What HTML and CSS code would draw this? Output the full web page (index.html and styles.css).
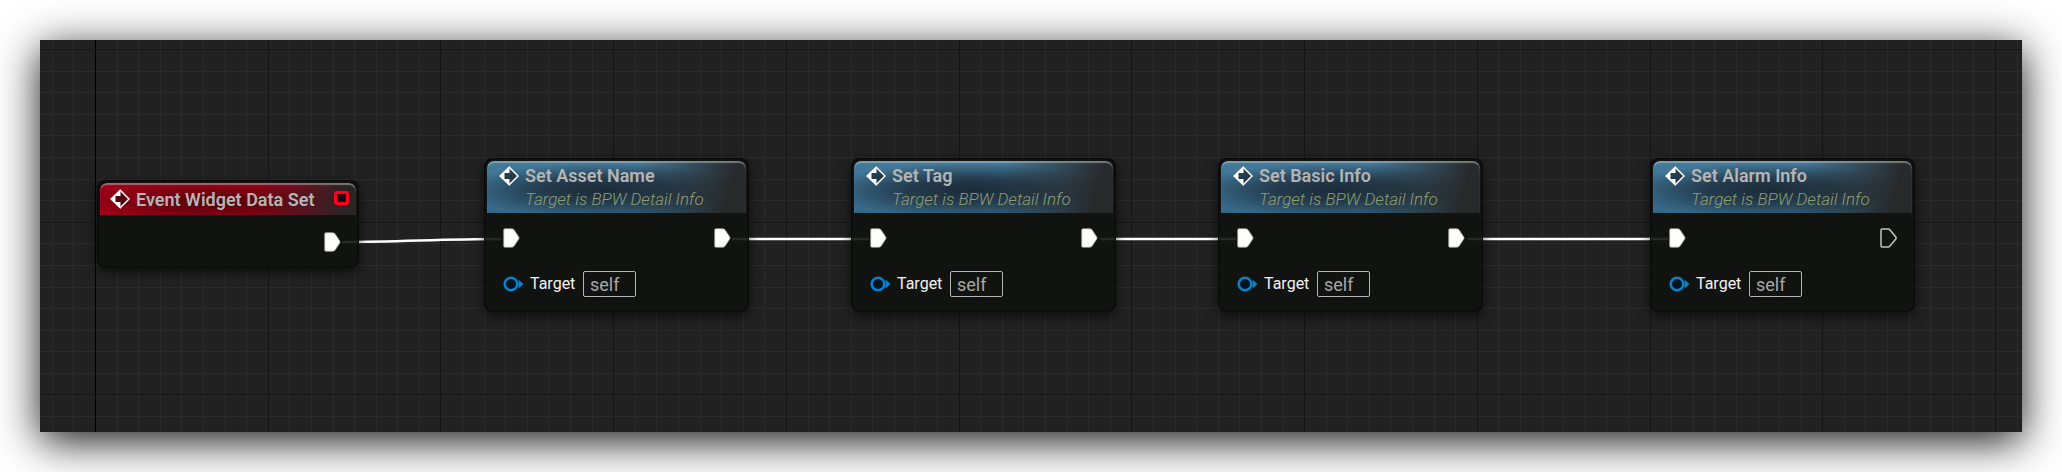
FILE: index.html
```html
<!DOCTYPE html>
<html lang="en">
<head>
<meta charset="utf-8">
<title>Event Graph</title>
<link rel="stylesheet" href="styles.css">
</head>
<body>
<svg class="defs" aria-hidden="true">
  <symbol id="event-icon" viewBox="0 0 20 20">
    <path d="M10 .8 L19.200 10 L10 19.200 L.8 10 Z" fill="#000" fill-opacity=".4"/>
    <path d="M10 1 L19 10 L10 19" fill="none" stroke="#fff" stroke-width="1.500"/>
    <path d="M10.500 0 L0 10 L10.500 20 V13 H5.500 V7 H10.500 Z" fill="#fff"/>
  </symbol>
  <symbol id="exec-on" viewBox="0 0 17 20">
    <path d="M2 .7 H8.500 Q10 .7 11 1.700 L15.800 9 Q16.400 10 15.800 11 L11 18.300 Q10 19.300 8.500 19.300 H2 Q.7 19.300 .7 18 V2 Q.7 .7 2 .7 Z" fill="#fff" stroke="#999" stroke-width=".8"/>
  </symbol>
  <symbol id="exec-off" viewBox="0 0 17 20">
    <path d="M2 1 H8 Q9.200 1 10 2 L15.800 9 Q16.400 10 15.800 11 L10 18 Q9.200 19 8 19 H2 Q1 19 1 18 V2 Q1 1 2 1 Z" fill="none" stroke="#c4c4c4" stroke-width="1.500"/>
  </symbol>
  <symbol id="object-pin" viewBox="0 0 21 16">
    <circle cx="8" cy="8" r="6.300" fill="#03121c" stroke="#0780d0" stroke-width="2.600"/>
    <path d="M15.500 3.500 L20.500 8 L15.500 12.500 Z" fill="#0780d0"/>
  </symbol>
</svg>

<main class="graph">
  <svg class="grid" id="grid" aria-hidden="true"></svg>
  <svg class="wires" aria-hidden="true">
    <path d="M302 202 C360 202 400 199 461 199"/>
    <path d="M692 199 H829"/>
    <path d="M1060 199 H1196"/>
    <path d="M1428 199 H1628"/>
  </svg>

  <article class="node event">
    <header class="head">
      <svg class="icon"><use href="#event-icon"/></svg>
      <h2 class="title">Event Widget Data Set</h2>
      <span class="delegate"></span>
    </header>
    <div class="row exec"><svg class="pin"><use href="#exec-on"/></svg></div>
  </article>

  <article class="node call asset">
    <header class="head">
      <svg class="icon"><use href="#event-icon"/></svg>
      <div><h2 class="title">Set Asset Name</h2><p class="sub">Target is BPW Detail Info</p></div>
    </header>
    <div class="row exec"><svg class="pin"><use href="#exec-on"/></svg><svg class="pin"><use href="#exec-on"/></svg></div>
    <div class="row target"><svg class="object"><use href="#object-pin"/></svg><label class="name" for="t1">Target</label><input class="self" id="t1" value="self"></div>
  </article>

  <article class="node call tag">
    <header class="head">
      <svg class="icon"><use href="#event-icon"/></svg>
      <div><h2 class="title">Set Tag</h2><p class="sub">Target is BPW Detail Info</p></div>
    </header>
    <div class="row exec"><svg class="pin"><use href="#exec-on"/></svg><svg class="pin"><use href="#exec-on"/></svg></div>
    <div class="row target"><svg class="object"><use href="#object-pin"/></svg><label class="name" for="t2">Target</label><input class="self" id="t2" value="self"></div>
  </article>

  <article class="node call basic">
    <header class="head">
      <svg class="icon"><use href="#event-icon"/></svg>
      <div><h2 class="title">Set Basic Info</h2><p class="sub">Target is BPW Detail Info</p></div>
    </header>
    <div class="row exec"><svg class="pin"><use href="#exec-on"/></svg><svg class="pin"><use href="#exec-on"/></svg></div>
    <div class="row target"><svg class="object"><use href="#object-pin"/></svg><label class="name" for="t3">Target</label><input class="self" id="t3" value="self"></div>
  </article>

  <article class="node call alarm">
    <header class="head">
      <svg class="icon"><use href="#event-icon"/></svg>
      <div><h2 class="title">Set Alarm Info</h2><p class="sub">Target is BPW Detail Info</p></div>
    </header>
    <div class="row exec"><svg class="pin"><use href="#exec-on"/></svg><svg class="pin"><use href="#exec-off"/></svg></div>
    <div class="row target"><svg class="object"><use href="#object-pin"/></svg><label class="name" for="t4">Target</label><input class="self" id="t4" value="self"></div>
  </article>
</main>
<script src="grid.js"></script>
</body>
</html>
```

FILE: styles.css
```css
* {
  box-sizing: border-box;
}

body {
  margin: 0;
  padding: 40px;
  min-height: 100vh;
  display: flex;
  background: #fff;
  font-family: Roboto, "Liberation Sans", sans-serif;
}

.defs {
  position: absolute;
  width: 0;
  height: 0;
}

.graph {
  position: relative;
  flex: 1;
  background: #212121;
  box-shadow: 0 9px 40px rgba(0, 0, 0, .92);
}

.grid,
.wires {
  position: absolute;
  inset: 0;
  width: 100%;
  height: 100%;
}

.grid .minor {
  fill: #2b2b2b;
}

.grid .major {
  fill: #151515;
}

.grid .origin {
  fill: #000;
}

.wires path {
  fill: none;
  stroke: #fff;
  stroke-width: 2.5;
}

.node {
  position: absolute;
  width: 265px;
  padding: 3px;
  border-radius: 9px;
  background: rgba(15, 18, 15, .9);
  box-shadow: inset 0 0 0 1px #0b0b0b, inset 0 0 2px 1px rgba(0, 0, 0, .5), 0 4px 12px rgba(0, 0, 0, .6);
}

.event { left: 57px; top: 140px; width: 262px; }
.asset { left: 444px; top: 118px; }
.tag { left: 811px; top: 118px; }
.basic { left: 1178px; top: 118px; }
.alarm { left: 1610px; top: 118px; }

.head {
  display: flex;
  align-items: flex-start;
  border-radius: 7px 7px 0 0;
}

.event .head {
  gap: 6px;
  height: 32px;
  padding: 6px 7px 0 10px;
  background:
    linear-gradient(100deg, rgba(36, 38, 38, 0) 60%, rgba(36, 38, 38, .95) 95%),
    radial-gradient(ellipse 50% 60% at 45% 60%, rgba(50, 0, 6, .75), rgba(50, 0, 6, 0)),
    #9b0016;
  box-shadow: inset 0 2px 1px rgba(170, 170, 170, .6);
}

.call .head {
  gap: 6px;
  height: 52px;
  padding: 5px 12px 0;
  background:
    linear-gradient(105deg, rgba(38, 38, 38, 0) 55%, rgba(38, 38, 38, .95) 92%),
    radial-gradient(ellipse 55% 52% at 45% 56%, rgba(26, 38, 50, .95), rgba(26, 38, 50, .7) 45%, rgba(26, 38, 50, 0)),
    linear-gradient(#447a9b, #356787);
  box-shadow: inset 0 2px 1px rgba(190, 200, 205, .5);
}

.icon {
  flex: none;
  width: 20px;
  height: 20px;
}

.title {
  margin: 0;
  color: #b5b5b5;
  font-size: 18px;
  font-weight: 600;
  line-height: 20px;
  white-space: nowrap;
}

.event .title {
  line-height: 22px;
}

.sub {
  margin: 0;
  color: #909e74;
  font-size: 17px;
  font-style: italic;
  font-weight: 300;
  line-height: 26px;
  white-space: nowrap;
}

.delegate {
  width: 15px;
  height: 14px;
  margin-left: auto;
  margin-top: 2px;
  border: 3px solid #ff0023;
  border-radius: 3px;
  background: #260004;
}

.row {
  display: flex;
  align-items: center;
}

.exec {
  justify-content: space-between;
  height: 50px;
  padding: 0 15px 0 16px;
}

.event .exec {
  justify-content: flex-end;
  padding-top: 3px;
}

.pin {
  width: 17px;
  height: 20px;
}

.target {
  height: 46px;
  padding-left: 16px;
  padding-bottom: 4px;
}

.object {
  width: 21px;
  height: 16px;
}

.name {
  width: 53px;
  margin-left: 6px;
  color: #f2f2f2;
  font-size: 16px;
  line-height: 20px;
}

.self {
  width: 53px;
  height: 26px;
  padding: 0 6px;
  border: 1px solid #b5b5b5;
  border-radius: 2px;
  background: transparent;
  color: #a8a8a8;
  font: 18px/20px Roboto, "Liberation Sans", sans-serif;
}
```

FILE: grid.js
```js
// Draws the canvas grid: eight minor cells to each major cell.
const grid = document.getElementById('grid');
const STEP = 1900 / 88;
const ORIGIN_X = 55;
const ORIGIN_Y = 9;

function bar(x, y, width, height, kind) {
  const rect = document.createElementNS('http://www.w3.org/2000/svg', 'rect');
  rect.setAttribute('x', x);
  rect.setAttribute('y', y);
  rect.setAttribute('width', width);
  rect.setAttribute('height', height);
  rect.setAttribute('class', kind);
  grid.appendChild(rect);
}

function draw() {
  grid.replaceChildren();
  const { width, height } = grid.getBoundingClientRect();
  for (const major of [false, true]) {
    const kind = major ? 'major' : 'minor';
    for (let i = -2; ORIGIN_X + i * STEP < width; i++) {
      if ((i % 8 === 0) === major) {
        bar(Math.round(ORIGIN_X + i * STEP), 0, 1, height, i === 0 ? 'origin' : kind);
      }
    }
    for (let i = 0; ORIGIN_Y + i * STEP < height; i++) {
      if ((i % 8 === 0) === major) {
        bar(0, Math.round(ORIGIN_Y + i * STEP), width, 1, kind);
      }
    }
  }
}

draw();
window.addEventListener('resize', draw);
```
